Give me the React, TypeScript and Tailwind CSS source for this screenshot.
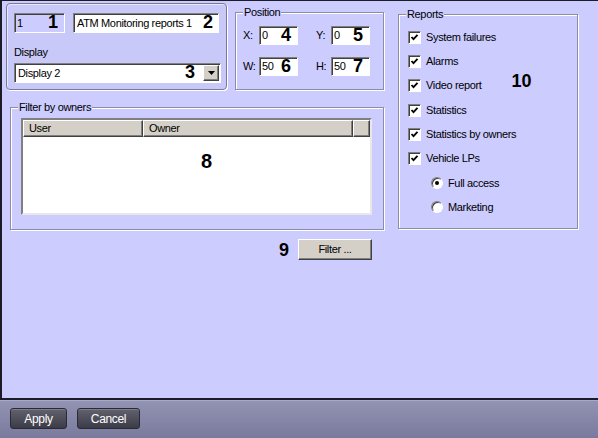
import React from 'react';

// Win-classic style helpers
const sunken =
  'border border-t-[#808080] border-l-[#808080] border-b-white border-r-white shadow-[inset_1px_1px_0_#404040]';
const raised =
  'bg-[#d4d0c8] border border-t-white border-l-white border-b-[#404040] border-r-[#404040] shadow-[inset_-1px_-1px_0_#808080]';
const etched = 'border border-[#8c8ca4] shadow-[1px_1px_0_#fff,inset_1px_1px_0_#fff]';

function Tag({ children }: { children: React.ReactNode }) {
  return <span className="text-[18px] font-bold leading-none tracking-normal text-black">{children}</span>;
}

function GroupLabel({ children }: { children: React.ReactNode }) {
  return (
    <span className="absolute -top-[7px] left-[7px] bg-[#ccccff] px-[1px] leading-[13px]">{children}</span>
  );
}

function PosField({ label, value, tag, lw }: { label: string; value: string; tag: string; lw: string }) {
  return (
    <div className="flex items-center">
      <span className={lw}>{label}</span>
      <div className={`${sunken} flex h-[19px] w-[39px] items-center bg-white pl-[2px] pr-[6px]`}>
        <span>{value}</span>
        <span className="ml-auto">
          <Tag>{tag}</Tag>
        </span>
      </div>
    </div>
  );
}

function Check({ label, extra }: { label: string; extra?: React.ReactNode }) {
  return (
    <div className="flex h-[24.3px] items-center">
      <div className={`${sunken} flex h-[13px] w-[13px] items-center justify-center bg-white`}>
        <svg width="9" height="9" viewBox="0 0 9 9">
          <polyline points="1.5,4 3.5,6.2 7.5,1.8" fill="none" stroke="#000" strokeWidth="1.8" />
        </svg>
      </div>
      <span className="ml-[5px]">{label}</span>
      {extra}
    </div>
  );
}

function Radio({ label, on }: { label: string; on?: boolean }) {
  return (
    <div className="flex h-[24.3px] items-center pl-[23px]">
      <div className="flex h-[12px] w-[12px] items-center justify-center rounded-full border border-t-[#808080] border-l-[#808080] border-b-white border-r-white bg-white shadow-[inset_1px_1px_0_#404040]">
        {on && <div className="h-[4px] w-[4px] rounded-full bg-black" />}
      </div>
      <span className="ml-[5px]">{label}</span>
    </div>
  );
}

export default function App() {
  return (
    <div
      className="flex h-[438px] w-[598px] flex-col overflow-hidden bg-[#ccccff] text-[11px] tracking-[-0.35px] text-black"
      style={{ fontFamily: '"Liberation Sans", Arial, sans-serif' }}
    >
      {/* main area */}
      <div className="flex h-[398px] border-l-2 border-t border-[#1c1c28] pl-[4px] pt-[2px]">
        {/* left column */}
        <div className="flex w-[378px] flex-col">
          <div className="flex items-start">
            {/* id / name / display panel */}
            <div className="h-[87px] w-[221px] rounded-[4px] border border-[#7a7a98] bg-[#c9c9f9] pl-[7px] pr-[7px] pt-[9px] shadow-[inset_1px_1px_0_#e8e8ff,1px_1px_0_#fff]">
              <div className="flex items-center">
                <div className={`${sunken} flex h-[20px] w-[51px] items-center bg-[#ccccff] pl-[2px] pr-[6px]`}>
                  <span>1</span>
                  <span className="ml-auto">
                    <Tag>1</Tag>
                  </span>
                </div>
                <div className={`${sunken} ml-[8px] flex h-[20px] w-[146px] items-center bg-white pl-[3px] pr-[5px]`}>
                  <span>ATM Monitoring reports 1</span>
                  <span className="ml-auto">
                    <Tag>2</Tag>
                  </span>
                </div>
              </div>
              <div className="mt-[13px] leading-[13px]">Display</div>
              <div className={`${sunken} mt-[4px] flex h-[20px] w-[207px] items-center bg-white pl-[3px] pr-[1px]`}>
                <span>Display 2</span>
                <span className="ml-auto mr-[8px]">
                  <Tag>3</Tag>
                </span>
                <div className={`${raised} flex h-[16px] w-[16px] items-center justify-center`}>
                  <svg width="7" height="4" viewBox="0 0 7 4">
                    <polygon points="0,0 7,0 3.5,4" fill="#000" />
                  </svg>
                </div>
              </div>
            </div>

            {/* position */}
            <div className={`${etched} relative ml-[8px] mt-[9px] h-[78px] w-[150px] pl-[7px] pt-[13px]`}>
              <GroupLabel>Position</GroupLabel>
              <div className="grid grid-cols-[73px_60px] gap-y-[12px]">
                <PosField label="X:" value="0" tag="4" lw="w-[16px]" />
                <PosField label="Y:" value="0" tag="5" lw="w-[15px]" />
                <PosField label="W:" value="50" tag="6" lw="w-[16px]" />
                <PosField label="H:" value="50" tag="7" lw="w-[15px]" />
              </div>
            </div>
          </div>

          {/* filter by owners */}
          <div className={`${etched} relative ml-[4px] mt-[17px] h-[123px] w-[374px] pl-[10px] pt-[10px]`}>
            <GroupLabel>Filter by owners</GroupLabel>
            <div className="h-[97px] w-[351px] border-2 border-t-[#808080] border-l-[#808080] border-b-[#e8e8e8] border-r-[#e8e8e8] bg-white">
              <div className="flex h-[17px]">
                <div className={`${raised} w-[120px] pl-[5px] leading-[15px]`}>User</div>
                <div className={`${raised} w-[210px] pl-[5px] leading-[15px]`}>Owner</div>
                <div className={`${raised} flex-1`} />
              </div>
              <div className="pl-[178px] pt-[14px]">
                <span className="text-[20px] font-bold leading-none">8</span>
              </div>
            </div>
          </div>

          <div className="mr-[12px] mt-[9px] flex items-center justify-end">
            <Tag>9</Tag>
            <div className={`${raised} ml-[9px] flex h-[21px] w-[74px] items-center justify-center`}>Filter ...</div>
          </div>
        </div>

        {/* reports */}
        <div className={`${etched} relative ml-[14px] mt-[11px] h-[215px] w-[180px] pl-[9px] pt-[10px]`}>
          <GroupLabel>Reports</GroupLabel>
          <Check label="System failures" />
          <Check label="Alarms" />
          <Check
            label="Video report"
            extra={
              <span className="-mt-[7px] ml-[30px]">
                <Tag>10</Tag>
              </span>
            }
          />
          <Check label="Statistics" />
          <Check label="Statistics by owners" />
          <Check label="Vehicle LPs" />
          <Radio label="Full access" on />
          <Radio label="Marketing" />
        </div>
      </div>

      {/* bottom bar */}
      <div className="flex h-[40px] items-start gap-[10px] border-t-2 border-[#1c1c28] bg-gradient-to-b from-[#9393b4] to-[#7a7a9c] pl-[10px] pt-[8px] shadow-[inset_0_1px_0_#a8a8c8]">
        <div className="flex h-[21px] w-[57px] items-center justify-center rounded-[3px] border border-[#2a2a36] bg-gradient-to-b from-[#62626f] to-[#3c3c48] text-[12px] text-white shadow-[inset_0_1px_0_#7c7c8c]">
          Apply
        </div>
        <div className="flex h-[21px] w-[63px] items-center justify-center rounded-[3px] border border-[#2a2a36] bg-gradient-to-b from-[#62626f] to-[#3c3c48] text-[12px] text-white shadow-[inset_0_1px_0_#7c7c8c]">
          Cancel
        </div>
      </div>
    </div>
  );
}
